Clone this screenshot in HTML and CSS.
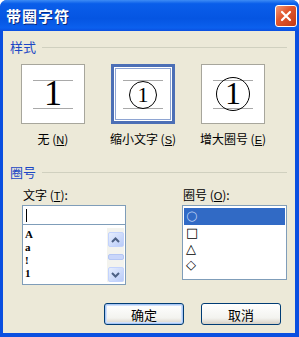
FILE: index.html
```html
<!DOCTYPE html>
<html lang="zh">
<head>
    <meta charset="UTF-8">
    <title>带圈字符</title>
    <link rel="stylesheet" href="styles.css">
</head>
<body>

    <div class="window">
        <div class="titlebar">
            <span class="title">带圈字符</span>
            <span class="close">
                <svg width="12" height="12" viewBox="0 0 12 12">
                    <path d="M2 2 L10 10 M10 2 L2 10" stroke="#fff" stroke-width="2.2" stroke-linecap="round"/>
                </svg>
            </span>
        </div>

        <div class="content">
            <div class="legend"><span>样式</span><i></i></div>

            <div class="styles">
                <div class="option">
                    <div class="preview">
                        <div class="sample"><span class="digit">1</span></div>
                    </div>
                    <div class="caption">无 (<u>N</u>)</div>
                </div>
                <div class="option">
                    <div class="preview selected">
                        <div class="sample"><span class="ring small">1</span></div>
                    </div>
                    <div class="caption">缩小文字 (<u>S</u>)</div>
                </div>
                <div class="option">
                    <div class="preview">
                        <div class="sample"><span class="ring big">1</span></div>
                    </div>
                    <div class="caption">增大圈号 (<u>E</u>)</div>
                </div>
            </div>

            <div class="legend"><span>圈号</span><i></i></div>

            <div class="pickers">
                <div class="picker left">
                    <div class="label">文字 (<u>T</u>):</div>
                    <div class="textbox"><span class="caret"></span></div>
                    <div class="list">
                        <ul class="chars">
                            <li>A</li>
                            <li>a</li>
                            <li>!</li>
                            <li>1</li>
                        </ul>
                        <div class="scrollbar">
                            <span class="arrow">
                                <svg width="9" height="6" viewBox="0 0 9 6"><path d="M1 5 L4.5 1.5 L8 5" fill="none" stroke="#4d6185" stroke-width="2"/></svg>
                            </span>
                            <span class="thumb"></span>
                            <span class="arrow">
                                <svg width="9" height="6" viewBox="0 0 9 6"><path d="M1 1 L4.5 4.5 L8 1" fill="none" stroke="#4d6185" stroke-width="2"/></svg>
                            </span>
                        </div>
                    </div>
                </div>

                <div class="picker right">
                    <div class="label">圈号 (<u>O</u>):</div>
                    <ul class="rings">
                        <li class="active">○</li>
                        <li>□</li>
                        <li>△</li>
                        <li>◇</li>
                    </ul>
                </div>
            </div>

            <div class="buttons">
                <button class="default">确定</button>
                <button>取消</button>
            </div>
        </div>
    </div>

</body>
</html>
```

FILE: styles.css
```css
* {
    margin: 0;
    padding: 0;
    box-sizing: border-box;
}

body {
    background: #fff;
    font-family: "Noto Sans CJK SC", "Liberation Sans", sans-serif;
    font-size: 12px;
    color: #000;
}

.window {
    width: 299px;
    height: 337px;
    display: flex;
    flex-direction: column;
    background: #0a4fe0;
    border-radius: 7px 7px 0 0;
    padding: 0 4px 4px 3px;
}

/* title bar */
.titlebar {
    height: 31px;
    display: flex;
    align-items: center;
    justify-content: space-between;
    padding: 0 2px 0 6px;
    margin: 0 -4px 0 -3px;
    border-radius: 7px 7px 0 0;
    background: linear-gradient(#3d8cf5 0%, #0a5eea 12%, #0555e2 60%, #0b60ee 90%, #0a4fe0 100%);
}

.title {
    color: #fff;
    font-size: 15px;
    font-weight: bold;
    letter-spacing: 1px;
    text-shadow: 1px 1px 0 #0a2a80;
}

.close {
    width: 22px;
    height: 22px;
    display: flex;
    align-items: center;
    justify-content: center;
    border: 1px solid #fff;
    border-radius: 3px;
    background: linear-gradient(135deg, #f29a7a 0%, #e2582f 40%, #c23a14 100%);
}

/* dialog body */
.content {
    flex: 1;
    background: #ece9d8;
    padding: 8px 5px 0 4px;
    display: flex;
    flex-direction: column;
}

.legend {
    display: flex;
    align-items: center;
    gap: 6px;
    padding: 0 3px 0 3px;
    color: #1c47c5;
    font-size: 13px;
    line-height: 15px;
}

.legend i {
    flex: 1;
    height: 1px;
    background: #d0d0bf;
    margin-top: 2px;
}

/* style choices */
.styles {
    display: grid;
    grid-template-columns: 90px 90px 90px;
    padding: 10px 0 0 1px;
    margin-bottom: 16px;
}

.option {
    display: flex;
    flex-direction: column;
    align-items: center;
    gap: 7px;
}

.preview {
    width: 64px;
    height: 60px;
    background: #fff;
    border: 1px solid #a7a69c;
    display: flex;
    align-items: center;
    justify-content: center;
}

.preview.selected {
    border: 3px solid #4c6fb6;
    box-shadow: inset 0 0 0 1px #fff, inset 0 0 0 2px #8ea4d2;
}

.sample {
    width: 40px;
    height: 29px;
    border-top: 1px solid #a9a9a9;
    border-bottom: 1px solid #a9a9a9;
    display: flex;
    align-items: flex-end;
    justify-content: center;
}

.digit {
    font-family: "Liberation Serif", serif;
    font-size: 36px;
    line-height: 28px;
    height: 29px;
}

.ring {
    display: flex;
    align-items: center;
    justify-content: center;
    border: 1.5px solid #000;
    border-radius: 50%;
    font-family: "Liberation Serif", serif;
}

.ring.small {
    width: 28px;
    height: 28px;
    font-size: 22px;
    margin-bottom: -1px;
}

.ring.big {
    width: 34px;
    height: 34px;
    font-size: 32px;
    margin-bottom: -3px;
}

.caption {
    font-size: 12px;
    line-height: 15px;
}

.caption u, .label u {
    font-family: "Liberation Sans", sans-serif;
    font-size: 11px;
}

/* ring pickers */
.pickers {
    display: flex;
    padding: 9px 0 0 15px;
}

.picker .label {
    line-height: 14px;
    margin-bottom: 2px;
    padding-left: 1px;
}

.picker.left {
    width: 160px;
}

.textbox {
    width: 104px;
    height: 20px;
    background: #fff;
    border: 1px solid #7f9db9;
    padding: 3px 3px;
}

.caret {
    display: block;
    width: 1px;
    height: 13px;
    background: #000;
}

.list {
    width: 104px;
    height: 60px;
    background: #fff;
    border: 1px solid #7f9db9;
    border-top: none;
    display: flex;
    justify-content: space-between;
    padding: 3px 1px 2px 2px;
}

.chars {
    list-style: none;
    font-family: "Liberation Serif", serif;
    font-weight: bold;
    font-size: 11px;
    line-height: 13px;
}

.scrollbar {
    width: 17px;
    display: flex;
    flex-direction: column;
    align-items: center;
    justify-content: space-between;
    background: #f3f3ee;
    padding-top: 4px;
}

.arrow {
    width: 16px;
    height: 15px;
    display: flex;
    align-items: center;
    justify-content: center;
    border: 1px solid #c3d3fd;
    border-radius: 2px;
    background: linear-gradient(135deg, #e6eefe, #b9cbf8);
}

.thumb {
    width: 16px;
    height: 6px;
    background: #c9d6fa;
    border: 1px solid #b4c6f4;
    border-radius: 2px;
}

.rings {
    list-style: none;
    width: 105px;
    height: 75px;
    background: #fff;
    border: 1px solid #7f9db9;
    padding: 2px 1px;
    font-family: "DejaVu Sans", sans-serif;
    font-size: 13px;
    line-height: 16px;
}

.rings li {
    height: 16px;
    padding-left: 2px;
    overflow: hidden;
}

.rings li.active {
    background: #316ac5;
    color: #bcd0f4;
    height: 17px;
}

/* buttons */
.buttons {
    display: flex;
    justify-content: flex-end;
    gap: 17px;
    margin-top: auto;
    padding: 0 9px 8px 0;
}

button {
    width: 80px;
    height: 22px;
    font-family: "Noto Sans CJK SC", sans-serif;
    font-size: 13px;
    border: 1px solid #003c74;
    border-radius: 3px;
    background: linear-gradient(#fff, #f3f3ef 70%, #d6d0c5);
    color: #000;
}

button.default {
    box-shadow: inset 0 0 0 1px #a9c7f5, inset 0 0 0 2px #cfe0fb;
}
```
